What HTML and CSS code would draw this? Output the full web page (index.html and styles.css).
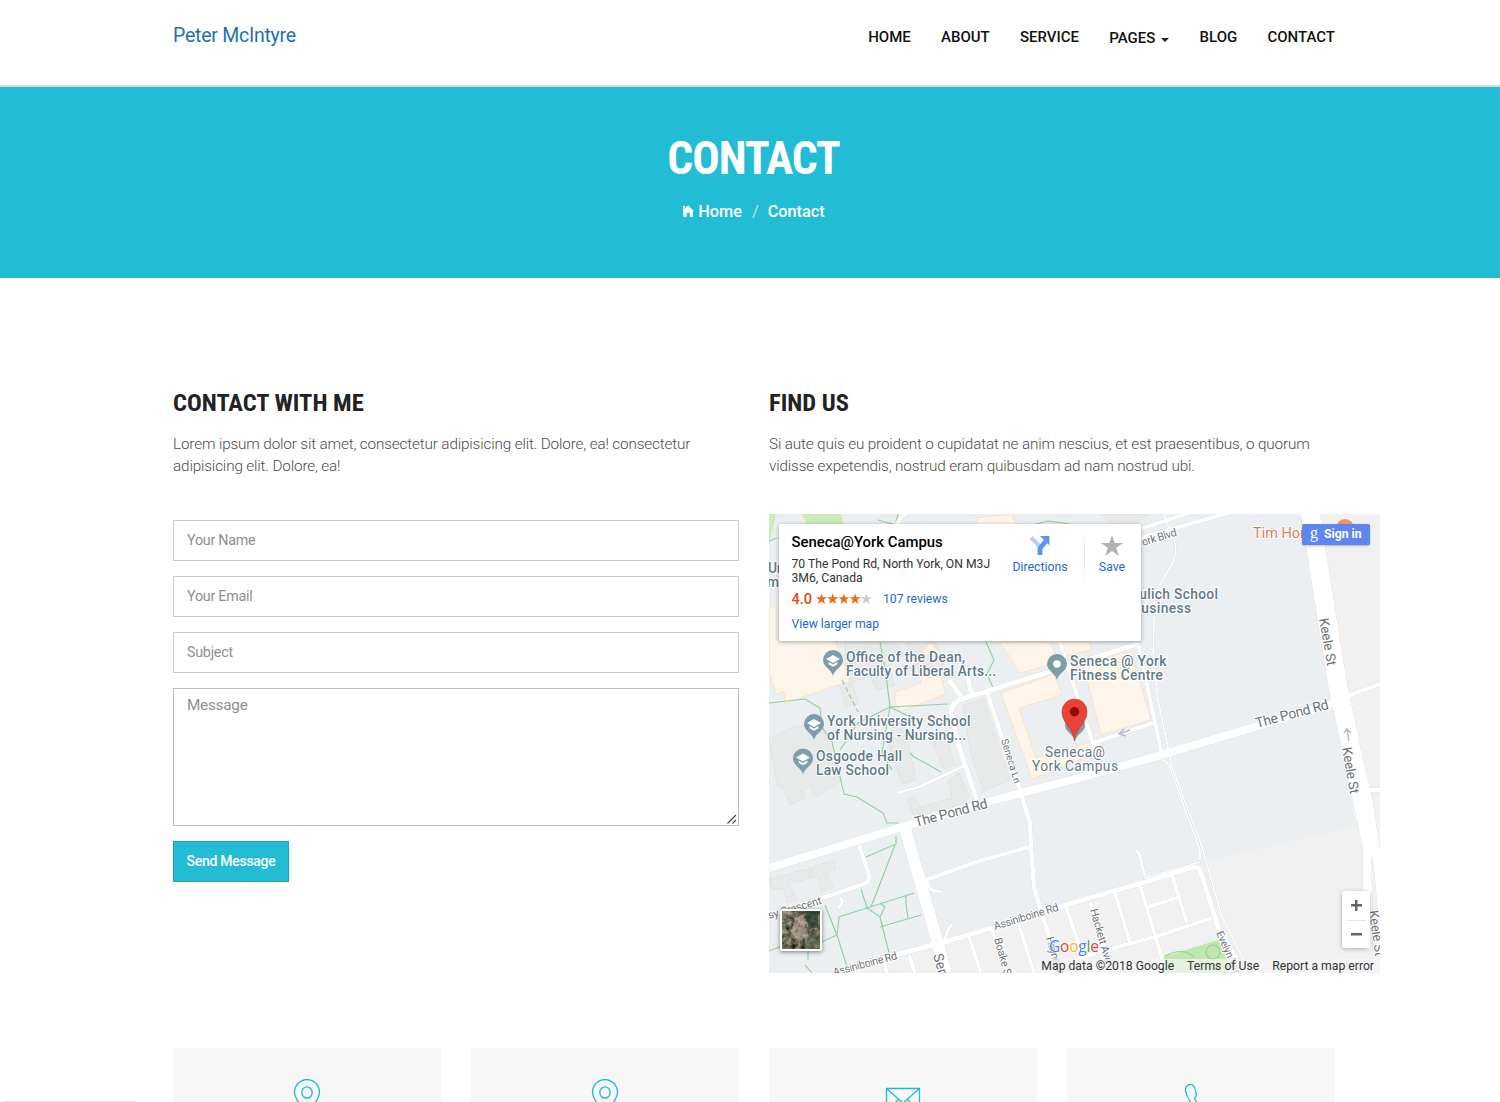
FILE: index.html
```html
<!DOCTYPE html>
<html lang="en">
<head>
<meta charset="utf-8">
<title>Contact - Peter McIntyre</title>
<link rel="stylesheet" href="styles.css">
</head>
<body>
<header class="site-header">
  <div class="container header-row">
    <a class="brand">Peter McIntyre</a>
    <nav class="nav">
      <a>Home</a><a>About</a><a>Service</a><a class="has-menu">Pages<span class="caret"></span></a><a>Blog</a><a>Contact</a>
    </nav>
  </div>
</header>
<section class="banner">
  <h1>Contact</h1>
  <div class="crumbs">
    <svg class="home" viewBox="0 0 12 12"><path d="M6 .6 11.9 6H11V11.8H7.8V7.8H4.8V11.8H1.2V6H.1ZM1 1H3V2.6L1 4.4Z" fill="#fff"/></svg>
    <a>Home</a><span class="slash">/</span><a>Contact</a>
  </div>
</section>
<main class="container">
  <div class="columns">
    <section class="col">
      <h2>Contact With Me</h2>
      <p>Lorem ipsum dolor sit amet, consectetur adipisicing elit. Dolore, ea! consectetur adipisicing elit. Dolore, ea!</p>
      <form class="form">
        <input class="field" placeholder="Your Name">
        <input class="field" placeholder="Your Email">
        <input class="field" placeholder="Subject">
        <div class="area-wrap">
          <textarea class="field area" placeholder="Message"></textarea>
          <svg class="grip" viewBox="0 0 10 10"><path d="M.5 9.5 9 1M5.5 9.5 9 6" stroke="#444" stroke-width="1.1"/></svg>
        </div>
        <button class="send" type="button">Send Message</button>
      </form>
    </section>
    <section class="col">
      <h2>Find Us</h2>
      <p>Si aute quis eu proident o cupidatat ne anim nescius, et est praesentibus, o quorum vidisse expetendis, nostrud eram quibusdam ad nam nostrud ubi.</p>
      <div class="map">
        <svg class="map-art" viewBox="769 514 611 459">
          <rect x="769" y="514" width="611" height="459" fill="#ebeff2"/>
          <!-- residential land -->
          <g fill="#f1f1f1">
            <path d="M1310 514H1380V973H1245L1205 862 1355 826Z"/>
            <path d="M825 973 944 942 1192 867 1200 870 1245 973Z"/>
          </g>
          <path d="M1163 957 1218 940 1229 961V973H1163Z" fill="#c0e8ae"/>
          <path d="M802 514H841L844 527H808ZM769 514H776L769 545Z" fill="#c9ecb8"/>
          <!-- campus buildings -->
          <g fill="#e8eaea" stroke="#dfe1e1" stroke-width=".8">
            <path d="M845 642H893L905 655 888 665 895 685 877 690 870 676 852 682 859 703 846 707 834 668 846 664Z"/>
            <path d="M905 644 933 636 948 675 925 684Z"/>
            <path d="M769 740 790 728 820 722 842 780 815 797 810 787 803 790 805 798 790 805 783 788 777 785Z"/>
            <path d="M885 733 905 728 916 780 902 784Z"/>
            <path d="M933 742 947 738 955 765 943 769Z"/>
            <path d="M963 705 984 699 1010 780 983 791 970 750Z"/>
            <path d="M907 799 915 797 920 807 952 798 948 780 959 773 969 797 961 805 913 815Z"/>
            <path d="M769 879 788 874 789 883 797 900 787 903 784 889 772 889ZM790 873 813 868 815 877 792 883ZM815 866 834 860 836 869 827 873 833 888 821 893 818 878Z"/>
            <path d="M1100 514 1150 514 1120 530Z"/>
          </g>
          <g fill="#fef5ea" stroke="#fbe2c6" stroke-width="1">
            <path d="M769 608 776 606V640L835 640 850 681 800 698 785 704 784 692 776 694 769 672Z"/>
            <path d="M895 692 921 683 919 676 938 668 946 694 901 711 895 703Z"/>
            <path d="M920 655 930 642 942 655ZM1000 642 1050 642 1060 662 1020 673Z"/>
            <path d="M1058 642H1090V650L1066 656Z"/>
            <path d="M1001 693 1054 674 1062 695 1019 708 1036 758 1075 746 1102 740 1104 750 1032 779Z"/>
            <path d="M1083 664 1131 651 1151 720 1101 735Z"/>
            <path d="M976 518 1012 514 1016 526H978Z"/>
          </g>
          <!-- footpaths -->
          <g fill="none" stroke="#8fd09a" stroke-width="1.1">
            <path d="M769 703 805 699 820 708 822 727 832 742 844 794 857 797 883 813 887 823 898 823"/>
            <path d="M842 680 858 712" stroke-dasharray="5 3"/>
            <path d="M880 642 886 675 890 707 858 723 840 750 M890 707 920 722 M890 707 948 704 M890 707 882 752 892 770"/>
            <path d="M986 642 994 660 987 674 994 690 M910 753 914 757 929 765 941 772"/>
            <path d="M896 836V844L866 857M895 845 871 907M861 889 867 908 839 917 837 935 822 942M867 908 914 893M867 908 880 917 885 907 880 903M880 917 889 953M880 927 921 915M906 896V904L908 918M825 905 838 938 848 970M769 951 782 946M808 948V960M805 965 812 973"/>
            <path d="M878 520 900 526M898 514 896 522M1036 524 1048 521 1070 524M769 541 777 538"/>
            <circle cx="1213" cy="952" r="7"/><path d="M1165 956Q1184 946 1195 958"/>
          </g>
          <!-- roads -->
          <g class="roads">
            <path stroke-width="8.4" d="M769 868 899 828 983 803 1079 778 1158 756 1208 741 1335 703"/>
            <path stroke-width="4.5" d="M1345 697 1380 684M1368 790H1380"/>
            <path stroke-width="12" d="M905 828 916 867 937 940 946 973"/>
            <path stroke-width="19" d="M1310 512 1323 593 1338 687 1350 742"/>
            <path stroke-width="9" d="M1345 742 1356 795 1367 846 1368 950M1354 740 1368 800 1379 873 1384 930"/>
            <path stroke-width="11" d="M1350 740 1363 806 1369 830"/>
            <path stroke-width="5" d="M884 958 944 942 992 928 1079 901 1142 883 1190 868Q1199 865 1201 873L1218 927 1245 975"/>
            <path stroke-width="5" d="M1049 672 962 699Q951 703 951 713L959 747 977 800M1049 672 1138 644M949 680 962 698M966 672 972 695"/>
            <path stroke-width="4.5" d="M987 692 1004 743 1019 787 1030 823 1031 847 1034 887 1049 937 1060 973"/>
            <path stroke-width="4" d="M926 880 976 862 1029 847M859 845 869 875Q870 882 864 884L822 898 769 915M1138 643 1162 755M1060 642 1072 680 1096 752M1093 743 1153 723"/>
            <path stroke-width="2.8" d="M841 897 842 903 838 909M897 793 919 787 949 773 966 765M926 880 931 890 941 892M944 942 948 930 952 924M1135 850 1139 853 1145 876"/>
            <path stroke-width="4" d="M1115 893 1130 943M1140 885 1165 969M1172 875 1187 923M1148 907 1177 898M1075 960 1095 953 1155 937 1212 918M1090 902 1108 957M969 937 981 973M992 930 1007 973M1019 925 1034 973M1066 907 1081 950M909 955 915 973M884 962 887 973"/>
            <path stroke-width="4" d="M897 526Q900 514 910 512M1140 538 1235 511M1140 529 1195 511"/>
            <path stroke-width="1.8" d="M1163 513 1175 543Q1177 553 1173 562L1155 593 1153 653 1158 700 1172 767 1202 847 1222 917 1250 973M1158 755 1169 765 1200 850V860M1200 862 1145 878"/>
          </g>
          <path d="M1130 730 1119 734M1124 729 1119 734 1126 736M1349 741 1347 729M1344 733 1347 729 1351 733" fill="none" stroke="#b3b9d3" stroke-width="1.5"/>
          <!-- street names -->
          <g class="street">
            <text transform="translate(916 827) rotate(-15)" textLength="75" font-size="14">The Pond Rd</text>
            <text transform="translate(1257 728) rotate(-15)" textLength="75" font-size="14">The Pond Rd</text>
            <text transform="translate(1319 619) rotate(80)" textLength="48" font-size="13.5">Keele St</text>
            <text transform="translate(1342 748) rotate(80)" textLength="47" font-size="13.5">Keele St</text>
            <text transform="translate(1369 911) rotate(82)" textLength="46" font-size="13">Keele St</text>
            <text transform="translate(995 930) rotate(-17)" textLength="67" font-size="11">Assiniboine Rd</text>
            <text transform="translate(834 976) rotate(-15)" textLength="66" font-size="11">Assiniboine Rd</text>
            <text transform="translate(1001 740) rotate(73)" textLength="46" font-size="10">Seneca Ln</text>
            <text transform="translate(994 939) rotate(74)" textLength="42" font-size="11">Boake St</text>
            <text transform="translate(1090 910) rotate(74)" textLength="56" font-size="11">Hackett Ave</text>
            <text transform="translate(1046 938) rotate(74)" textLength="50" font-size="11">Haynes Ave</text>
            <text transform="translate(1216 933) rotate(66)" textLength="66" font-size="10.5">Evelyn Wiggins</text>
            <text transform="translate(933 955) rotate(74)" font-size="14">Sentinel Rd</text>
            <text transform="translate(752 924) rotate(-16)" textLength="73" font-size="11">Passy Crescent</text>
            <text transform="translate(1143 546) rotate(-17)" textLength="36" font-size="11">ork Blvd</text>
          </g>
          <!-- place names -->
          <g class="place">
            <text x="846" y="662" textLength="119">Office of the Dean,</text><text x="846" y="676" textLength="150">Faculty of Liberal Arts...</text>
            <text x="827" y="725.5" textLength="143.500">York University School</text><text x="827" y="740" textLength="139">of Nursing - Nursing...</text>
            <text x="816" y="760.5" textLength="86">Osgoode Hall</text><text x="816" y="775" textLength="73">Law School</text>
            <text x="1070" y="665.5" textLength="96.500">Seneca @ York</text><text x="1070" y="680" textLength="93">Fitness Centre</text>
            <text x="1045" y="757" textLength="60" class="thin">Seneca@</text><text x="1032" y="771" textLength="86" class="thin">York Campus</text>
            <text x="1115" y="599" textLength="103">Schulich School</text><text x="1115" y="613" textLength="76">of Business</text>
            <text x="768" y="573">Ur</text><text x="767" y="587">m</text>
            <text x="1253" y="538" class="food">Tim Hortons</text>
          </g>
          <circle cx="1345" cy="528" r="9" fill="#f3935c"/>
          <defs>
            <g id="pin"><path d="M0 16C-1.6 9-10 7-10 0a10 10 0 0 1 20 0C10 7 1.6 9 0 16Z" fill="#7d9dab"/></g>
            <g id="school"><use href="#pin"/><path d="M-7-1 0-5 7-1 0 3ZM-4.3 2 0 4.4 4.3 2V4.5L0 6.8-4.3 4.5Z" fill="#fff"/></g>
          </defs>
          <use href="#school" x="833" y="660"/><use href="#school" x="814" y="724"/><use href="#school" x="803" y="758.5"/>
          <use href="#pin" x="1057" y="664"/><circle cx="1057" cy="664" r="3.8" fill="#fff"/>
          <use href="#pin" x="1075" y="725"/>
          <path d="M1074.500 741C1073 727 1062 724 1062 711.500a12.500 12.500 0 0 1 25 0C1087 724 1076 727 1074.500 741Z" fill="#ea4335" stroke="#c8372d" stroke-width=".6"/><circle cx="1074.500" cy="711.700" r="4.700" fill="#960a0a"/>
        </svg>
        <div class="info">
          <div class="info-main">
            <div class="info-title">Seneca@York Campus</div>
            <div class="info-address">70 The Pond Rd, North York, ON M3J<br>3M6, Canada</div>
            <div class="info-rating"><b>4.0</b><svg class="stars" viewBox="0 0 56 12"><defs><path id="star" d="M5.500 .5 6.900 4.300H11L7.800 6.800 8.900 11 5.500 8.500 2.100 11 3.200 6.800 0 4.300H4.100Z"/></defs><g fill="#e7711b"><use href="#star"/><use href="#star" x="11.200"/><use href="#star" x="22.400"/><use href="#star" x="33.600"/></g><use href="#star" x="44.800" fill="#ccc"/></svg><a>107 reviews</a></div>
            <a class="info-link">View larger map</a>
          </div>
          <div class="info-action directions"><svg viewBox="0 0 20 20"><path d="M1.500 2.500 9 10" stroke="#b8d0fd" stroke-width="4"/><path d="M10 19V12.500L15.500 6" fill="none" stroke="#5d94f5" stroke-width="4.600"/><path d="M10 1H19V10Z" fill="#5d94f5"/></svg><a>Directions</a></div>
          <div class="divider"></div>
          <div class="info-action save"><svg viewBox="0 0 22 21"><path d="M11 0 13.600 7.900H22L15.200 12.800 17.800 21 11 16 4.200 21 6.800 12.800 0 7.900H8.400Z" fill="#b3b3b3"/></svg><a>Save</a></div>
        </div>
        <div class="signin"><span class="g">g</span>Sign in</div>
        <svg class="thumb" viewBox="0 0 40 40">
          <defs><filter id="terrain" x="0" y="0" width="100%" height="100%" color-interpolation-filters="sRGB"><feTurbulence type="fractalNoise" baseFrequency=".2" numOctaves="4" seed="8"/><feColorMatrix values=".8 .3 0 0 -.12  .7 .4 0 0 -.13  .6 .3 0 0 -.1  0 0 0 0 1"/></filter></defs>
          <rect width="40" height="40" filter="url(#terrain)"/>
          <path d="M25 0H38V17L28 19Z" fill="#263d2d" opacity=".7"/><path d="M14 7 23 4 25 20 29 27 18 31 9 22Z" fill="#d3bfa8" opacity=".45"/><path d="M28 22 40 18V40H24Z" fill="#59634a" opacity=".55"/>
        </svg>
        <div class="zoomer"><span class="plus"></span><i></i><span class="minus"></span></div>
        <div class="google"><span class="b">G</span><span class="r">o</span><span class="y">o</span><span class="b">g</span><span class="gr">l</span><span class="r">e</span></div>
        <div class="legal"><span>Map data ©2018 Google</span><span>Terms of Use</span><span>Report a map error</span></div>
      </div>
    </section>
  </div>
  <div class="cards">
    <div class="card"><svg viewBox="0 0 36 40"><path d="M18 36C15 29 5.500 21 5.500 13.500a12.500 13 0 0 1 25 0C30.500 21 21 29 18 36Z"/><ellipse cx="18" cy="13.500" rx="5.200" ry="5.600"/></svg></div>
    <div class="card"><svg viewBox="0 0 36 40"><path d="M18 36C15 29 5.500 21 5.500 13.500a12.500 13 0 0 1 25 0C30.500 21 21 29 18 36Z"/><ellipse cx="18" cy="13.500" rx="5.200" ry="5.600"/></svg></div>
    <div class="card"><svg viewBox="0 0 36 40"><path d="M1.500 9.500H34.500V34H1.500ZM1.500 9.500 18 24 34.500 9.500M10 24 13.500 20.500M26 24 22.500 20.500"/></svg></div>
    <div class="card"><svg viewBox="0 0 36 40"><path d="M7 5.500C3.500 6 2 9 2.500 12 4 20 11 30 22 35L28 31 22 26 17 28C15 25 13 22 11.500 19.500 13 18 13.500 15.500 13 14 12.500 9 10 4.500 7 5.500Z"/></svg></div>
  </div>
</main>
<div class="status"></div>
</body>
</html>
```
FILE: styles.css
```css
* { box-sizing: border-box; }
html { overflow: hidden; }
body { margin: 0; height: 1102px; overflow: hidden; background: #fff; color: #222; font-family: Roboto, "Liberation Sans", sans-serif; position: relative; }
.container { width: 1162px; margin-left: 173px; }
.site-header { height: 87px; border-bottom: 2px solid #d5dcdd; }
.header-row { display: flex; justify-content: space-between; }
.brand { font-size: 19.5px; line-height: 24px; padding-top: 24px; color: #1f70b0; letter-spacing: -.25px; }
.nav { display: flex; gap: 30.3px; padding-top: 27px; font-size: 15px; line-height: 20px; font-weight: 500; letter-spacing: -.01px; text-transform: uppercase; color: #111; }
.has-menu { display: flex; align-items: center; padding-top: 1px; height: 20px; }
.caret { margin: 4px 0 0 6px; border: 4px solid transparent; border-top-color: #222; border-bottom: 0; }
.banner { height: 191px; background: #22bdd5; color: #fff; display: flex; flex-direction: column; align-items: center; padding: 44px 0 0 7px; }
h1, h2 { margin: 0; font-family: "Roboto Condensed", Roboto, sans-serif; font-stretch: 75%; font-weight: 700; text-transform: uppercase; white-space: nowrap; }
h1 { font-size: 45.5px; line-height: 55px; letter-spacing: -1px; }
.crumbs { display: flex; align-items: center; margin-top: 14px; height: 22px; font-size: 16.3px; font-weight: 500; }
.home { width: 12px; height: 12px; margin-right: 4px; }
.slash { margin: 0 9px 0 10px; color: #d0d9dc; font-weight: 400; }
.columns { display: grid; grid-template-columns: 566px 566px; gap: 30px; height: 770px; padding-top: 110px; }
h2 { font-size: 24.5px; line-height: 30px; color: #222; }
p { margin: 15px 0 0; font-size: 15.3px; line-height: 22px; font-weight: 300; letter-spacing: -.16px; color: #4c4c4c; }
.form { margin-top: 43px; display: flex; flex-direction: column; align-items: flex-start; }
.field { display: block; width: 566px; height: 41px; margin: 0 0 15.2px; border: 1px solid #ccc; border-radius: 0; padding: 0 13px 2px; font: 14.3px Roboto, sans-serif; letter-spacing: -.25px; background: #fff; outline: none; }
.field::placeholder { color: #8e8e8e; opacity: 1; }
.area-wrap { position: relative; margin-top: -.6px; }
.area { height: 138px; padding: 6px 13px; font-size: 15.3px; line-height: 20px; resize: none; border-color: #bbb; }
.grip { position: absolute; right: 2px; bottom: 17px; width: 10px; height: 10px; }
.send { width: 116px; height: 41px; margin-top: -.4px; border: 1px solid #12a8bd; background: #22bdd5; color: #fff; padding: 0 0 1px; font: 500 14px Roboto, sans-serif; letter-spacing: -.28px; white-space: nowrap; }
.map { position: relative; width: 611px; height: 459px; margin-top: 37px; overflow: hidden; }
.map-art { display: block; width: 611px; height: 459px; }
.roads { fill: none; stroke: #fff; stroke-linejoin: round; filter: drop-shadow(0 0 .7px #b5b9bc); }
.street { fill: #6d7277; stroke: #fff; stroke-width: 2px; paint-order: stroke; }
.place { font-size: 13.8px; font-weight: 500; fill: #5f7a86; stroke: #fff; stroke-width: 2px; paint-order: stroke; }
.thin { font-weight: 400; }
.food { fill: #d98055; font-size: 14.5px; font-weight: 400; }
.info { position: absolute; left: 10px; top: 10px; width: 362px; height: 117px; background: #fff; border-radius: 2px; box-shadow: 0 1px 4px rgba(0,0,0,.35); display: flex; }
.info a { color: #1a6ad8; }
.info-main { width: 224px; padding: 9px 0 0 12.5px; font-size: 12.2px; white-space: nowrap; }
.info-title { font-size: 14.9px; font-weight: 500; line-height: 19px; color: #000; }
.info-address { margin-top: 6px; line-height: 13.5px; color: #333; }
.info-rating { display: flex; align-items: center; height: 18px; margin-top: 5px; }
.info-rating b { font-size: 14.5px; font-weight: 500; color: #dd4b10; }
.stars { width: 56px; height: 12px; margin: 0 11px 0 4px; }
.info-link { display: block; margin-top: 9px; line-height: 15px; }
.info-action { display: flex; flex-direction: column; align-items: center; font-size: 12.3px; padding-top: 11px; white-space: nowrap; }
.info-action svg { width: 22px; height: 21px; margin-bottom: 4px; }
.directions { width: 74px; }
.divider { width: 1px; height: 54px; margin: 6px 0 0 7px; background: linear-gradient(#fff, #e3e3e3, #fff); }
.save { width: 54px; }
.signin { position: absolute; left: 533px; top: 10px; width: 68px; height: 21px; border-radius: 2px; background: #5d86f0; box-shadow: 0 1px 2px rgba(0,0,0,.25); color: #fff; font-size: 12.2px; font-weight: 700; line-height: 21px; white-space: nowrap; display: flex; padding-left: 8px; gap: 6px; }
.g { font-family: "Liberation Serif", serif; font-size: 16px; line-height: 18px; font-weight: 400; }
.thumb { position: absolute; left: 10.5px; top: 394.5px; width: 42px; height: 42px; border: 2px solid #fff; border-radius: 2px; box-shadow: 0 1px 4px rgba(0,0,0,.5); }
.zoomer { position: absolute; left: 573px; top: 377px; width: 28px; height: 57px; background: #fff; border-radius: 2px; box-shadow: 0 1px 4px rgba(0,0,0,.3); display: flex; flex-direction: column; align-items: center; justify-content: space-between; padding: 9px 0 8px; }
.zoomer i { width: 19px; height: 1px; background: #e6e6e6; }
.plus, .minus { width: 11px; height: 11px; background: linear-gradient(#666,#666) center/11px 2.5px no-repeat; margin-left: 1px; }
.plus { background: linear-gradient(#666,#666) center/11px 2.5px no-repeat, linear-gradient(#666,#666) center/2.5px 11px no-repeat; }
.google { position: absolute; left: 280px; top: 423px; font: 500 15.5px/18px "Open Sans", sans-serif; letter-spacing: -.2px; text-shadow: 0 0 1px #fff, 0 0 2px #fff, 0 0 2px #fff; }
.b { color: #4285f4; } .r { color: #ea4335; } .y { color: #fbbc05; } .gr { color: #34a853; }
.legal { position: absolute; right: 0; bottom: -1px; height: 15px; padding: 0 6px; display: flex; gap: 13px; background: rgba(245,245,245,.7); font-size: 12.2px; line-height: 15px; color: #333; white-space: nowrap; }
.cards { display: grid; grid-template-columns: repeat(4, 268px); gap: 30px; }
.card { height: 54px; background: #f7f7f7; overflow: hidden; display: flex; justify-content: center; align-items: flex-start; padding-top: 31px; }
.card svg { width: 36px; height: 40px; flex: none; fill: none; stroke: #1abcd3; stroke-width: 1.3; }
.status { position: absolute; left: 4px; bottom: 0; width: 132px; height: 1px; background: #ddd; }
```
